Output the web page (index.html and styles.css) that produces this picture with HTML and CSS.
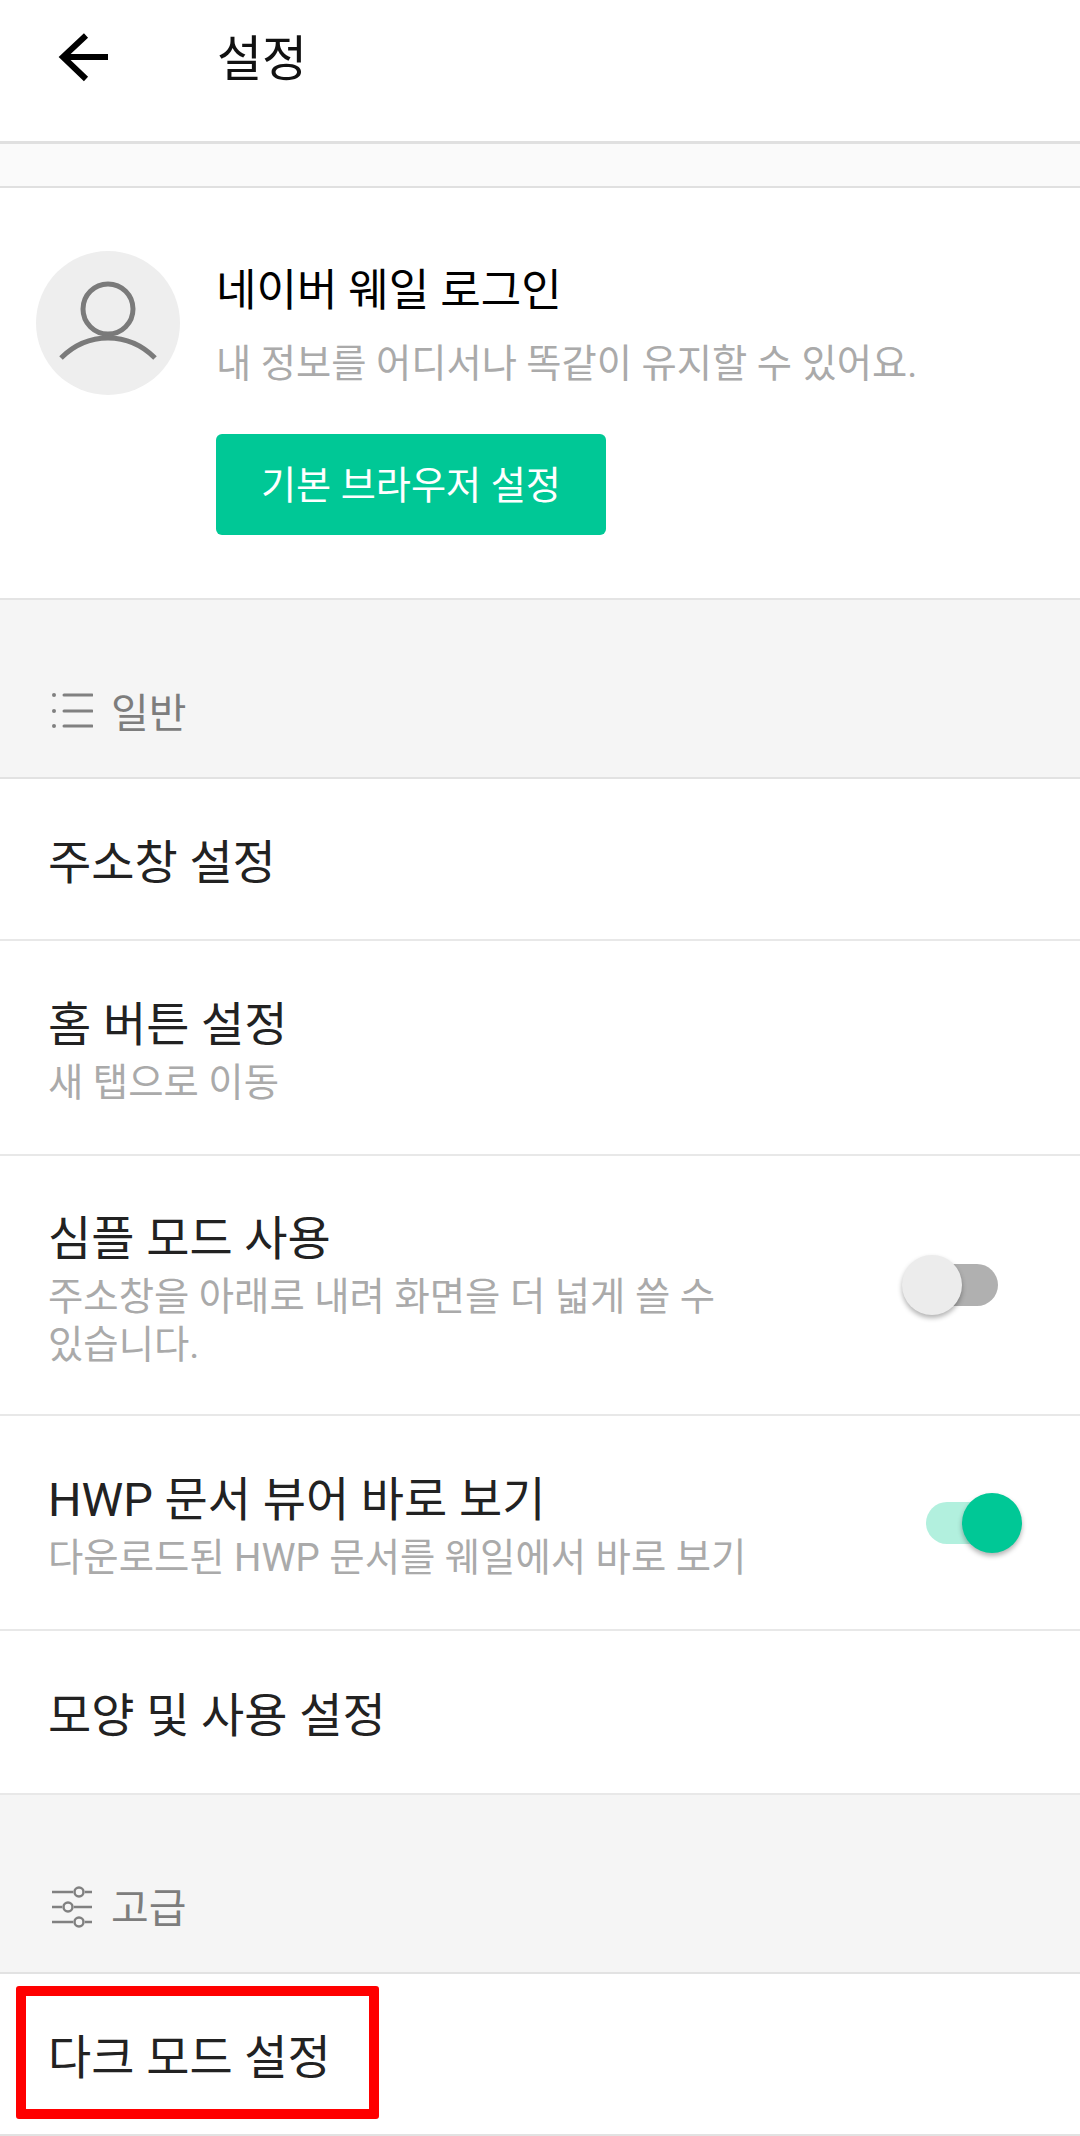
FILE: index.html
```html
<!DOCTYPE html>
<html lang="ko">
<head>
    <meta charset="UTF-8">
    <title>설정</title>
    <link rel="stylesheet" href="styles.css">
</head>
<body>

<div class="page">
    <div class="header">
        <svg class="back-icon" width="52" height="52" viewBox="0 0 52 52">
            <path d="M50 25H6M28 3.500L5 25l23 22" fill="none" stroke="#000" stroke-width="6"/>
        </svg>
        <h1 class="page-title">설정</h1>
    </div>
    <div class="strip"></div>

    <div class="profile">
        <div class="avatar">
            <svg width="144" height="144" viewBox="0 0 144 144">
                <circle cx="72" cy="58" r="25" fill="none" stroke="#7a7a7a" stroke-width="5"/>
                <path d="M25 107C38 94 54 87 72 87s34 7 47 20" fill="none" stroke="#7a7a7a" stroke-width="5"/>
            </svg>
        </div>
        <div class="profile-info">
            <div class="login-title">네이버 웨일 로그인</div>
            <div class="login-sub">내 정보를 어디서나 똑같이 유지할 수 있어요.</div>
            <div class="default-btn">기본 브라우저 설정</div>
        </div>
    </div>

    <div class="section-label">
        <svg class="section-icon" width="44" height="44" viewBox="0 0 44 44">
            <g fill="#808080">
                <circle cx="5" cy="5" r="2"/>
                <circle cx="5" cy="21" r="2"/>
                <circle cx="5" cy="36" r="2"/>
            </g>
            <path d="M15 5h28M15 21h28M15 36h28" stroke="#808080" stroke-width="3" stroke-linecap="round"/>
        </svg>
        <span>일반</span>
    </div>

    <div class="row row-single">
        <div class="row-text"><div class="row-title">주소창 설정</div></div>
    </div>
    <div class="row row-home">
        <div class="row-text">
            <div class="row-title">홈 버튼 설정</div>
            <div class="row-sub">새 탭으로 이동</div>
        </div>
    </div>
    <div class="row row-simple">
        <div class="row-text">
            <div class="row-title">심플 모드 사용</div>
            <div class="row-sub narrow">주소창을 아래로 내려 화면을 더 넓게 쓸 수 있습니다.</div>
        </div>
        <div class="toggle">
            <div class="track"></div>
            <div class="knob"></div>
        </div>
    </div>
    <div class="row row-home">
        <div class="row-text">
            <div class="row-title">HWP 문서 뷰어 바로 보기</div>
            <div class="row-sub">다운로드된 HWP 문서를 웨일에서 바로 보기</div>
        </div>
        <div class="toggle on">
            <div class="track"></div>
            <div class="knob"></div>
        </div>
    </div>
    <div class="row row-single general-last">
        <div class="row-text"><div class="row-title">모양 및 사용 설정</div></div>
    </div>

    <div class="section-label">
        <svg class="section-icon" width="44" height="44" viewBox="0 0 44 44">
            <path d="M3 7h21M36 7h7M3 22h10M25 22h18M3 37h21M36 37h7" stroke="#808080" stroke-width="2.500"/>
            <g fill="none" stroke="#808080" stroke-width="2.500">
                <circle cx="30" cy="7" r="4.500"/>
                <circle cx="19" cy="22" r="4.500"/>
                <circle cx="30" cy="37" r="4.500"/>
            </g>
        </svg>
        <span>고급</span>
    </div>

    <div class="row row-single dark-row">
        <div class="row-text"><div class="row-title">다크 모드 설정</div></div>
    </div>

    <div class="highlight"></div>
</div>

</body>
</html>
```

FILE: styles.css
```css
body {
    margin: 0;
    background-color: white;
    font-family: Roboto, "Noto Sans CJK KR", sans-serif;
}

.page {
    position: relative;
    width: 1080px;
    height: 2136px;
    overflow: hidden;
}

.header {
    display: flex;
    align-items: center;
    box-sizing: border-box;
    height: 144px;
    padding: 0 0 26px 58px;
    border-bottom: 3px solid #e0e0e0;
}

.back-icon {
    display: block;
}

.page-title {
    margin: 4px 0 0 107px;
    font-size: 49px;
    font-weight: 400;
    line-height: 60px;
    color: #111;
}

.strip {
    box-sizing: border-box;
    height: 44px;
    background-color: #fafafa;
    border-bottom: 2px solid #e0e0e0;
}

.profile {
    display: flex;
    box-sizing: border-box;
    height: 412px;
    padding: 63px 0 0 36px;
    border-bottom: 2px solid #e4e4e4;
}

.avatar {
    width: 144px;
    height: 144px;
    border-radius: 50%;
    background-color: #eeeeee;
}

.avatar svg {
    display: block;
}

.profile-info {
    margin-left: 36px;
    padding-top: 10px;
}

.login-title {
    font-size: 44px;
    line-height: 60px;
    color: #000;
}

.login-sub {
    margin-top: 18px;
    font-size: 38.3px;
    line-height: 50px;
    color: #aaaaaa;
}

.default-btn {
    box-sizing: border-box;
    width: 390px;
    height: 101px;
    margin-top: 45px;
    padding-top: 4px;
    border-radius: 6px;
    background-color: #00c896;
    color: white;
    font-size: 38.2px;
    line-height: 97px;
    text-align: center;
}

.section-label {
    display: flex;
    align-items: flex-end;
    box-sizing: border-box;
    height: 179px;
    padding: 0 0 35px 49px;
    background-color: #f5f5f5;
    border-bottom: 2px solid #e2e2e2;
    color: #7d7d7d;
    font-size: 41px;
    line-height: 56px;
}

.section-icon {
    display: block;
    margin: 0 18px 8px 0;
}

.row {
    display: flex;
    align-items: center;
    justify-content: space-between;
    box-sizing: border-box;
    padding: 7px 0 0 48px;
    border-bottom: 2px solid #e8e8e8;
}

.row-single {
    height: 162px;
}

.row-home {
    height: 215px;
}

.row-simple {
    height: 260px;
}

.general-last {
    height: 164px;
}

.dark-row {
    border-bottom-color: #e2e2e2;
}

.row-title {
    font-size: 47px;
    line-height: 60px;
    color: #222;
}

.row-sub {
    font-size: 38.4px;
    line-height: 48px;
    margin-top: 4px;
    color: #aaaaaa;
}

.narrow {
    width: 700px;
    word-break: keep-all;
}

.toggle {
    position: relative;
    flex-shrink: 0;
    width: 120px;
    height: 60px;
    margin: -7px 58px 0 0;
}

.track {
    position: absolute;
    left: 24px;
    top: 9px;
    width: 72px;
    height: 42px;
    border-radius: 21px;
    background-color: #b0b0b0;
}

.knob {
    position: absolute;
    left: 0;
    top: 0;
    width: 60px;
    height: 60px;
    border-radius: 50%;
    background-color: #ececec;
    box-shadow: 0 3px 5px rgba(0, 0, 0, 0.3);
}

.toggle.on .track {
    background-color: #b2f0de;
}

.toggle.on .knob {
    left: 60px;
    background-color: #00c896;
}

.highlight {
    position: absolute;
    left: 16px;
    top: 1986px;
    box-sizing: border-box;
    width: 363px;
    height: 133px;
    border: 10px solid #ff0000;
    border-radius: 3px;
}
```
